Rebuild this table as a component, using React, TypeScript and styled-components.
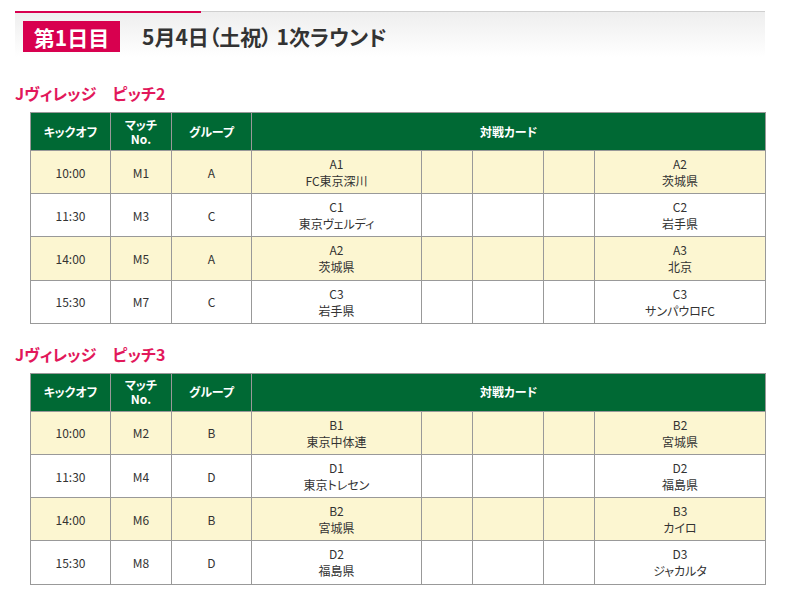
import styled, { createGlobalStyle } from "styled-components";

const GlobalStyle = createGlobalStyle`
  body {
    margin: 0;
    background: #fff;
    font-family: "Noto Sans CJK JP", "Noto Sans", sans-serif;
    font-feature-settings: "palt";
    color: #333;
  }
`;

const Page = styled.div`
  width: 750px;
  padding: 11px 0 0 15px;
`;

const DayHeader = styled.div`
  position: relative;
  height: 46px;
  border-top: 1px solid #cfcfcf;
  background: linear-gradient(to bottom, #eeeeee, #ffffff);
  display: flex;
  align-items: flex-start;
  gap: 22px;
  padding: 9px 0 0 8px;
  box-sizing: border-box;

  &::before {
    content: "";
    position: absolute;
    left: 0;
    top: -1px;
    width: 186px;
    height: 2px;
    background: #d8004f;
  }
`;

const DayBadge = styled.div`
  background: #d8004f;
  color: #fff;
  font-size: 21px;
  font-weight: 700;
  height: 31px;
  width: 97px;
  display: flex;
  align-items: center;
  justify-content: center;
`;

const DayTitle = styled.h1`
  margin: 0;
  font-size: 21px;
  font-weight: 700;
  color: #333;
  line-height: 31px;
`;

const PitchTitle = styled.h2<{ $top: number }>`
  margin: ${(p) => p.$top}px 0 0;
  font-size: 16px;
  font-weight: 700;
  color: #e2185b;
  line-height: 22px;
`;

const Table = styled.table`
  margin: 8px 0 0 15px;
  width: 735px;
  border-collapse: collapse;
  table-layout: fixed;
  font-size: 12px;
`;

const Th = styled.th`
  background: #006934;
  color: #fff;
  font-weight: 700;
  font-size: 12px;
  line-height: 14px;
  height: 37px;
  padding: 0;
  border: 1px solid #999;
  text-align: center;
`;

const Row = styled.tr<{ $alt: boolean }>`
  background: ${(p) => (p.$alt ? "#fcf6d1" : "#fff")};
`;

const Td = styled.td`
  border: 1px solid #999;
  height: 42.2px;
  padding: 0;
  text-align: center;
  line-height: 17px;
  color: #333;
`;

const widths = [80, 61, 80, 170, 51, 71, 51, 171];

type Match = {
  time: string;
  no: string;
  group: string;
  home: [string, string];
  away: [string, string];
};

const pitch2: Match[] = [
  { time: "10:00", no: "M1", group: "A", home: ["A1", "FC東京深川"], away: ["A2", "茨城県"] },
  { time: "11:30", no: "M3", group: "C", home: ["C1", "東京ヴェルディ"], away: ["C2", "岩手県"] },
  { time: "14:00", no: "M5", group: "A", home: ["A2", "茨城県"], away: ["A3", "北京"] },
  { time: "15:30", no: "M7", group: "C", home: ["C3", "岩手県"], away: ["C3", "サンパウロFC"] },
];

const pitch3: Match[] = [
  { time: "10:00", no: "M2", group: "B", home: ["B1", "東京中体連"], away: ["B2", "宮城県"] },
  { time: "11:30", no: "M4", group: "D", home: ["D1", "東京トレセン"], away: ["D2", "福島県"] },
  { time: "14:00", no: "M6", group: "B", home: ["B2", "宮城県"], away: ["B3", "カイロ"] },
  { time: "15:30", no: "M8", group: "D", home: ["D2", "福島県"], away: ["D3", "ジャカルタ"] },
];

const ScheduleTable = ({ matches }: { matches: Match[] }) => (
  <Table>
    <colgroup>
      {widths.map((w, i) => (
        <col key={i} style={{ width: w }} />
      ))}
    </colgroup>
    <thead>
      <tr>
        <Th>キックオフ</Th>
        <Th>
          マッチ
          <br />
          No.
        </Th>
        <Th>グループ</Th>
        <Th colSpan={5}>対戦カード</Th>
      </tr>
    </thead>
    <tbody>
      {matches.map((m, i) => (
        <Row key={m.no} $alt={i % 2 === 0}>
          <Td>{m.time}</Td>
          <Td>{m.no}</Td>
          <Td>{m.group}</Td>
          <Td>
            {m.home[0]}
            <br />
            {m.home[1]}
          </Td>
          <Td />
          <Td />
          <Td />
          <Td>
            {m.away[0]}
            <br />
            {m.away[1]}
          </Td>
        </Row>
      ))}
    </tbody>
  </Table>
);

export default function App() {
  return (
    <Page>
      <GlobalStyle />
      <DayHeader>
        <DayBadge>第1日目</DayBadge>
        <DayTitle>5月4日（土祝） 1次ラウンド</DayTitle>
      </DayHeader>
      <PitchTitle $top={25}>Jヴィレッジ　ピッチ2</PitchTitle>
      <ScheduleTable matches={pitch2} />
      <PitchTitle $top={19}>Jヴィレッジ　ピッチ3</PitchTitle>
      <ScheduleTable matches={pitch3} />
    </Page>
  );
}
